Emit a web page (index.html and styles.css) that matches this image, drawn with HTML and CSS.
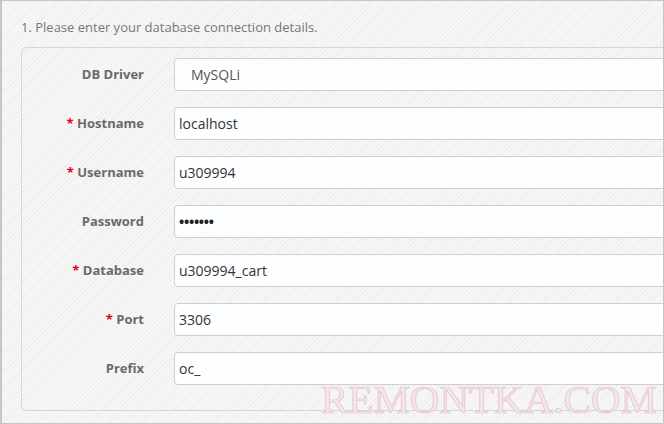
FILE: index.html
```html
<!DOCTYPE html>
<html>
<head>
<meta charset="utf-8">
<link rel="stylesheet" href="styles.css">
</head>
<body>
<div class="page">
  <p class="intro">1. Please enter your database connection details.</p>
  <div class="box">
    <div class="row"><label class="lbl">DB Driver</label><div class="field select">MySQLi</div></div>
    <div class="row"><label class="lbl"><span class="req">*</span> Hostname</label><div class="field">localhost</div></div>
    <div class="row"><label class="lbl"><span class="req">*</span> Username</label><div class="field">u309994</div></div>
    <div class="row"><label class="lbl">Password</label><div class="field pw">&bull;&bull;&bull;&bull;&bull;&bull;&bull;</div></div>
    <div class="row"><label class="lbl"><span class="req">*</span> Database</label><div class="field">u309994_cart</div></div>
    <div class="row"><label class="lbl"><span class="req">*</span> Port</label><div class="field">3306</div></div>
    <div class="row"><label class="lbl">Prefix</label><div class="field">oc_</div></div>
  </div>
  <div class="watermark">REMONTKA.COM</div>
</div>
</body>
</html>
```
FILE: styles.css
```css
html, body {
  margin: 0;
  padding: 0;
}
body {
  width: 664px;
  height: 424px;
  overflow: hidden;
  font-family: "Open Sans", "DejaVu Sans", sans-serif;
}
.page {
  position: relative;
  width: 664px;
  height: 424px;
  box-sizing: border-box;
  border: 1px solid #c6c6c6;
  border-left: 2px solid #c6c6c6;
  overflow: hidden;
  padding: 16px 0 0 19px;
  background-color: #f5f5f6;
  background-image: repeating-linear-gradient(135deg, #f7f7f8 0px, #f7f7f8 2px, #eeeef0 2px, #eeeef0 3px);
}
.intro {
  margin: 0;
  font-size: 13px;
  line-height: 20px;
  color: #777;
}
.box {
  margin-top: 10px;
  width: 720px;
  box-sizing: border-box;
  border: 1px solid #d6d6d6;
  border-radius: 5px;
  padding: 10px 0 25px 0;
  display: flex;
  flex-direction: column;
  gap: 16px;
}
.row {
  display: flex;
  align-items: center;
  height: 33px;
}
.lbl {
  width: 122px;
  text-align: right;
  font-size: 13px;
  font-weight: 700;
  color: #6a6a6a;
  margin-right: 30px;
  line-height: 18px;
  margin-top: -2px;
}
.req {
  color: #e3001b;
}
.field {
  flex: 1;
  height: 33px;
  box-sizing: border-box;
  border: 1px solid #cfcfcf;
  border-radius: 4px;
  background: #fdfeff;
  font-size: 14px;
  line-height: 31px;
  color: #333;
  padding-left: 4px;
}
.field.select {
  padding-left: 16px;
  color: #555;
}
.field.pw {
  font-size: 14px;
  letter-spacing: -0.3px;
  color: #222;
  font-weight: 700;
}
.watermark {
  position: absolute;
  left: 319px;
  top: 377px;
  font-family: "Liberation Serif", "Times New Roman", serif;
  font-size: 41px;
  line-height: 42px;
  color: #f5e8ea;
  -webkit-text-stroke: 0.7px #e6c0c6;
}
```
